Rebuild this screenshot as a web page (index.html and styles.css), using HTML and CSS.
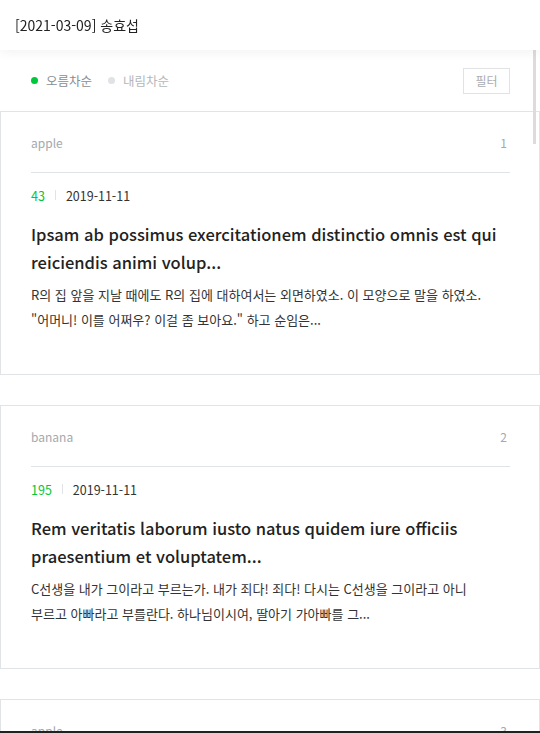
FILE: index.html
```html
<!DOCTYPE html>
<html lang="ko">
<head>
<meta charset="utf-8">
<title>feed</title>
<link rel="stylesheet" href="styles.css">
</head>
<body>
<header class="header">[2021-03-09] 송효섭</header>
<main class="page">
  <div class="toolbar">
    <ul class="sort">
      <li class="sort-item active"><span class="dot"></span>오름차순</li>
      <li class="sort-item"><span class="dot"></span>내림차순</li>
    </ul>
    <button class="filter-btn" type="button">필터</button>
  </div>
  <ul class="feed">
    <li class="card">
      <div class="card-head"><span class="cat">apple</span><span class="num">1</span></div>
      <div class="meta"><span class="uid">43</span><span class="bar"></span><span class="date">2019-11-11</span></div>
      <h2 class="title">Ipsam ab possimus exercitationem distinctio omnis est qui reiciendis animi volup...</h2>
      <p class="body">R의 집 앞을 지날 때에도 R의 집에 대하여서는 외면하였소. 이 모양으로 말을 하였소. "어머니! 이를 어쩌우? 이걸 좀 보아요." 하고 순임은...</p>
    </li>
    <li class="card">
      <div class="card-head"><span class="cat">banana</span><span class="num">2</span></div>
      <div class="meta"><span class="uid">195</span><span class="bar"></span><span class="date">2019-11-11</span></div>
      <h2 class="title">Rem veritatis laborum iusto natus quidem iure officiis praesentium et voluptatem...</h2>
      <p class="body">C선생을 내가 그이라고 부르는가. 내가 죄다! 죄다! 다시는 C선생을 그이라고 아니 부르고 아빠라고 부를란다. 하나님이시여, 딸아기 가아빠를 그...</p>
    </li>
    <li class="card">
      <div class="card-head"><span class="cat">apple</span><span class="num">3</span></div>
      <div class="meta"><span class="uid">12</span><span class="bar"></span><span class="date">2019-11-11</span></div>
      <h2 class="title">Lorem ipsum dolor sit amet consectetur adipisci...</h2>
      <p class="body">내용</p>
    </li>
  </ul>
</main>
<div class="scroll-thumb"></div>
<div class="bottom-edge"></div>
</body>
</html>
```
FILE: styles.css
```css
* { box-sizing: border-box; }
html, body { margin: 0; padding: 0; background: #fff; }
body {
  font-family: "Noto Sans CJK KR", "Noto Sans", sans-serif;
  color: #222;
  overflow: hidden;
  height: 733px;
  word-break: keep-all;
}
.header {
  position: relative;
  z-index: 2;
  height: 50px;
  padding: 0 15px;
  display: flex;
  align-items: center;
  font-size: 14px;
  color: #222;
  background: #fff;
  box-shadow: 0 3px 10px rgba(0, 0, 0, 0.05);
}
.toolbar {
  height: 61px;
  display: flex;
  align-items: center;
  justify-content: space-between;
  padding: 0 30px 0 30px;
}
.sort {
  list-style: none;
  margin: 0;
  padding: 0;
  display: flex;
  gap: 15px;
}
.sort-item {
  display: flex;
  align-items: center;
  gap: 8px;
  font-size: 12.5px;
  color: #b4b7ba;
}
.sort-item.active { color: #8a8d90; }
.dot {
  width: 7px;
  height: 7px;
  border-radius: 50%;
  background: #e0e2e5;
  margin-left: 1px;
}
.sort-item.active .dot { background: #00c73c; }
.filter-btn {
  width: 47px;
  height: 26px;
  border: 1px solid #e1e2e3;
  background: #fff;
  font-family: inherit;
  font-size: 12px;
  color: #a9adb1;
  padding: 0;
}
.feed {
  list-style: none;
  margin: 0;
  padding: 0;
  display: flex;
  flex-direction: column;
  gap: 30px;
}
.card {
  border: 1px solid #e1e4e6;
  padding: 0 29px 42px 30px;
}
.card-head {
  height: 61px;
  display: flex;
  align-items: center;
  justify-content: space-between;
  border-bottom: 1px solid #e1e4e6;
  font-size: 12px;
  color: #a4a9ae;
  padding-top: 1px;
}
.num { padding-right: 3px; }
.meta {
  margin-top: 12px;
  height: 20px;
  display: flex;
  align-items: center;
  font-size: 12.5px;
}
.uid { color: #00c73c; }
.bar {
  width: 1px;
  height: 10px;
  background: #e1e4e6;
  margin: 0 10px;
}
.date { color: #333; }
.title {
  margin: 15px 0 0;
  font-size: 16.5px;
  font-weight: 500;
  line-height: 28px;
  color: #222;
}
.body {
  margin: 6px 0 0;
  font-size: 13px;
  line-height: 25px;
  color: #333;
  padding-right: 20px;
}
.scroll-thumb {
  position: fixed;
  top: 50px;
  left: 533px;
  width: 3px;
  height: 94px;
  background: #dcdcdc;
}
.bottom-edge {
  position: fixed;
  left: 0;
  right: 0;
  bottom: 0;
  height: 2px;
  background: #222;
}
```
